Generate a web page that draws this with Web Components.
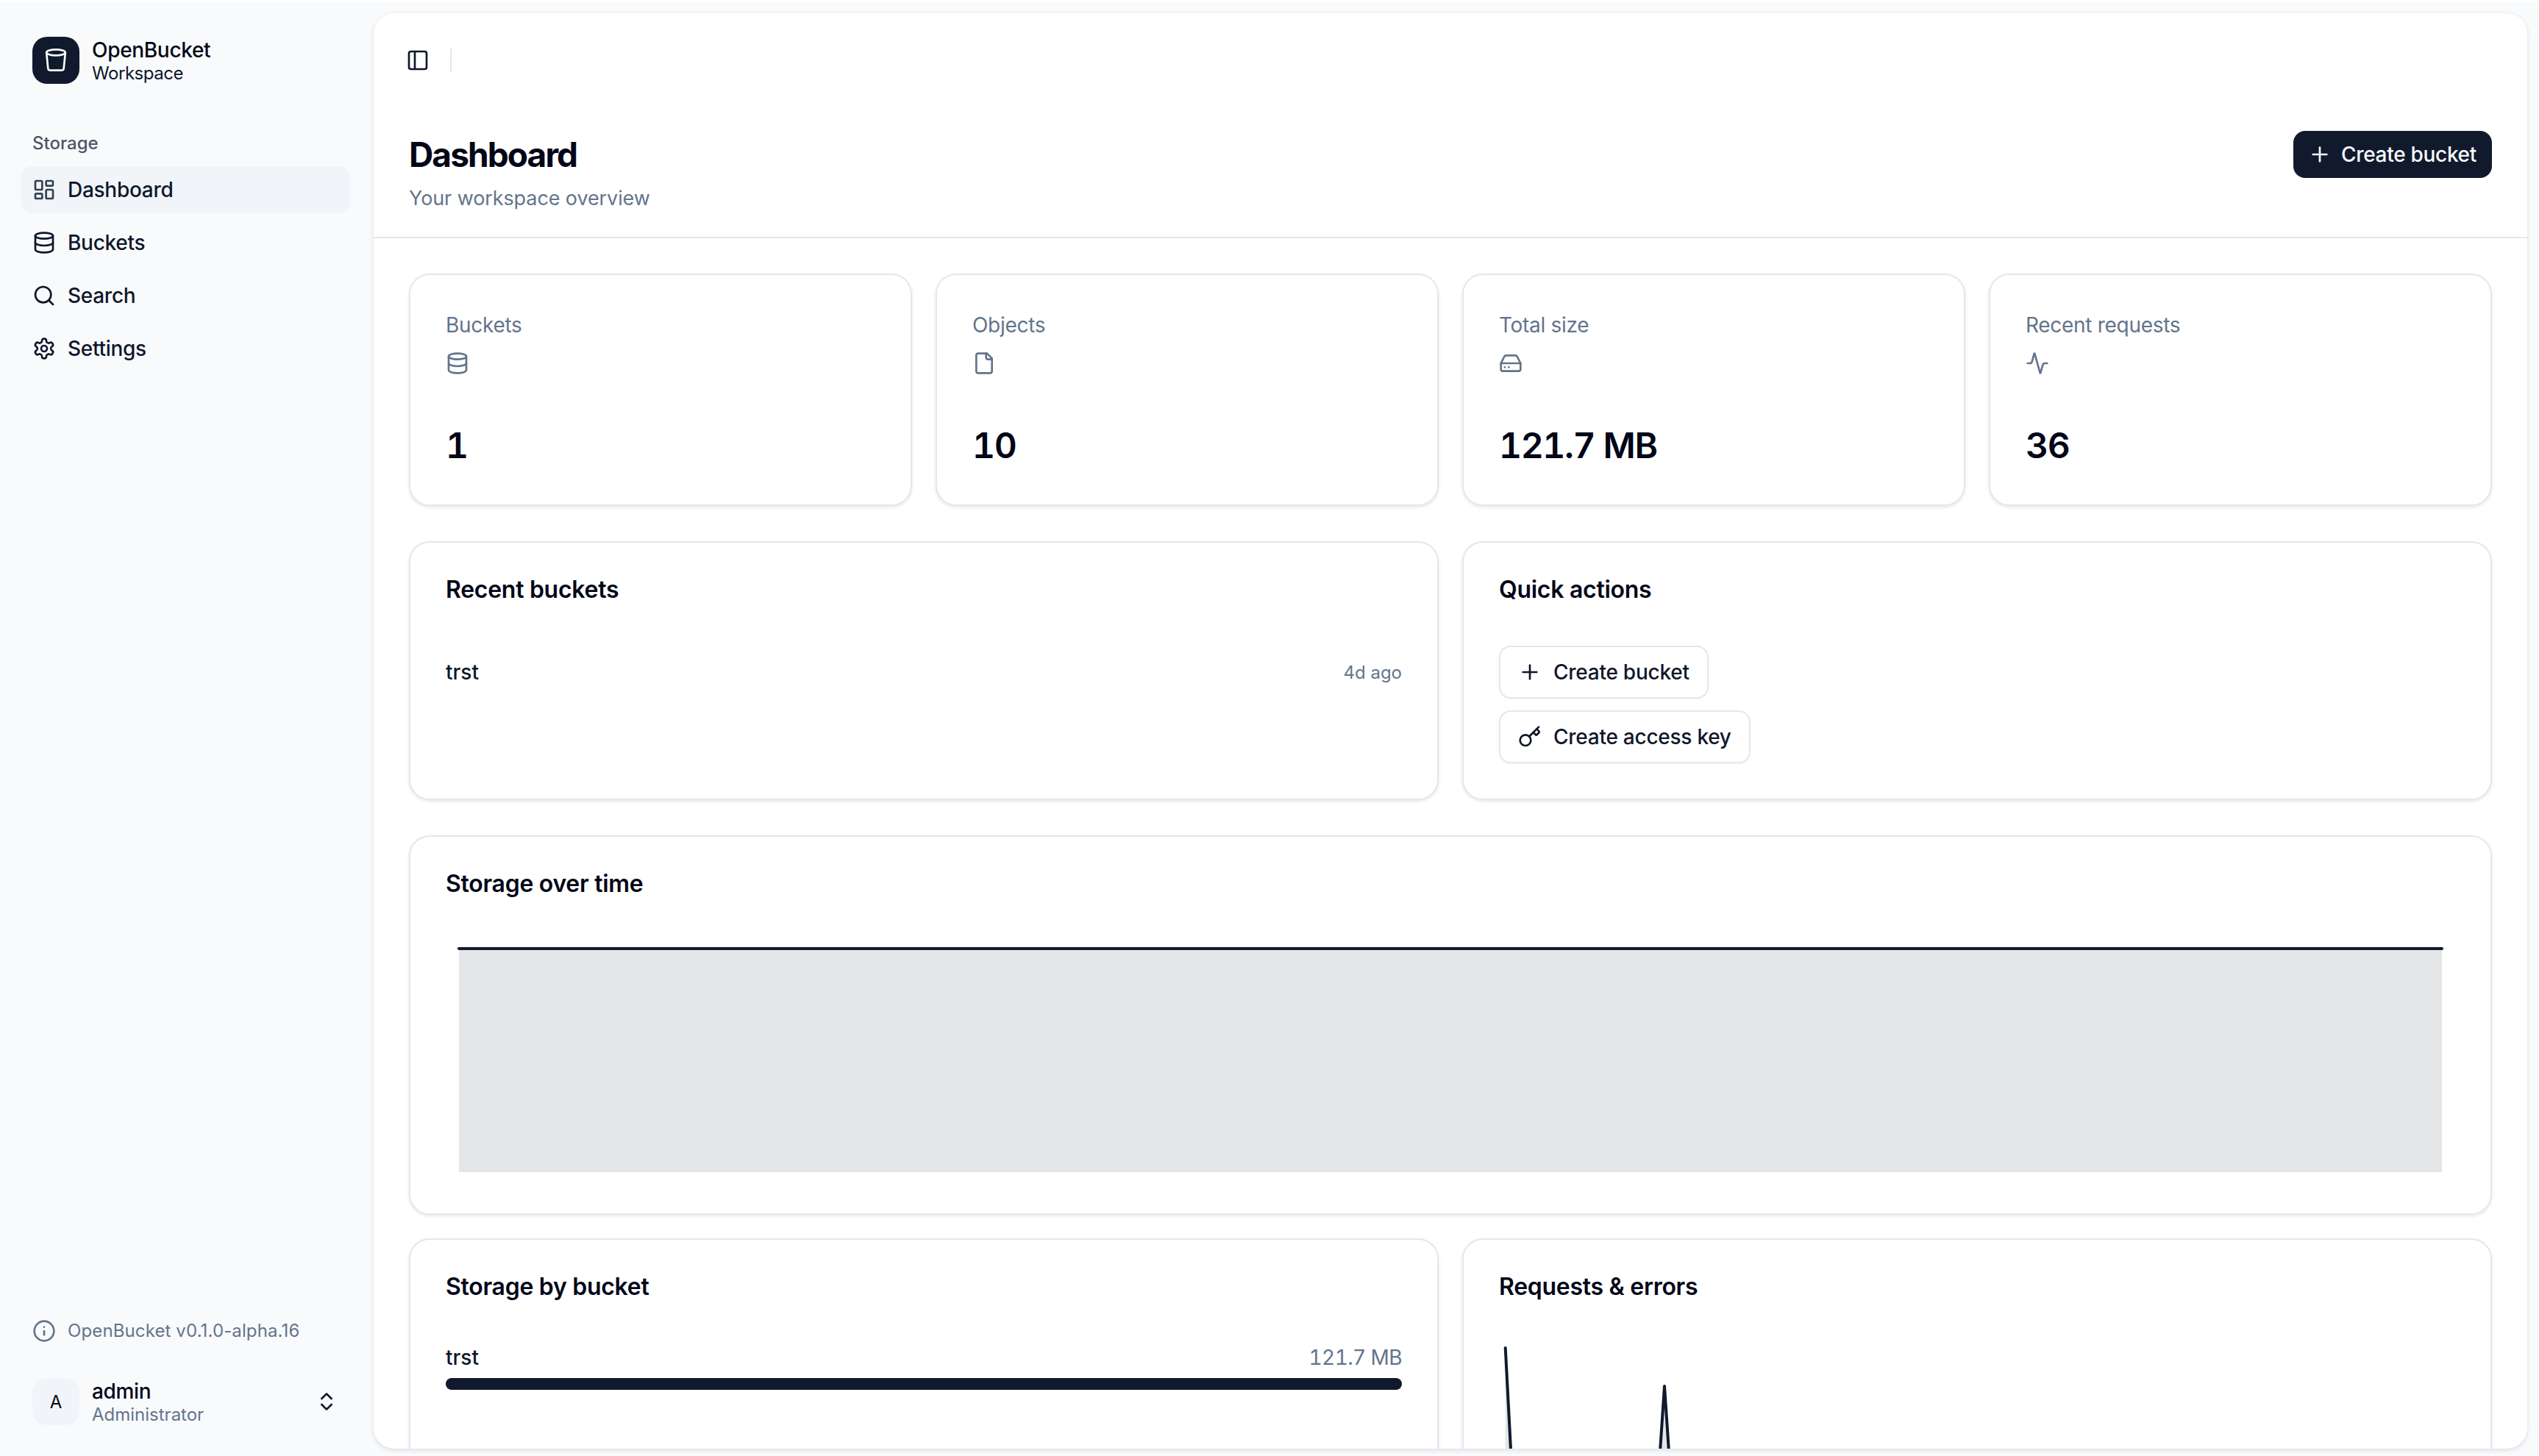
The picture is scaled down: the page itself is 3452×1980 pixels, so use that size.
<!DOCTYPE html>
<html lang="en">
<head>
<meta charset="utf-8">
<title>OpenBucket</title>
<style>
html,body{margin:0;padding:0;height:100%;background:#fff;overflow:hidden}
body{font-family:Inter,"Noto Sans",sans-serif;color:#0f172a;-webkit-font-smoothing:antialiased}
</style>
</head>
<body>
<ob-app>
  <ob-sidebar slot="sidebar"></ob-sidebar>
  <ob-main slot="main">
    <ob-grid columns="4">
      <ob-stat label="Buckets" icon="database" value="1"></ob-stat>
      <ob-stat label="Objects" icon="file" value="10"></ob-stat>
      <ob-stat label="Total size" icon="hard-drive" value="121.7 MB"></ob-stat>
      <ob-stat label="Recent requests" icon="activity" value="36"></ob-stat>
    </ob-grid>
    <ob-grid columns="2">
      <ob-card heading="Recent buckets"><ob-bucket-row name="trst" when="4d ago"></ob-bucket-row></ob-card>
      <ob-card heading="Quick actions">
        <ob-actions>
          <ob-button icon="plus">Create bucket</ob-button>
          <ob-button icon="key">Create access key</ob-button>
        </ob-actions>
      </ob-card>
    </ob-grid>
    <ob-stack>
      <ob-card heading="Storage over time"><ob-area-chart></ob-area-chart></ob-card>
      <ob-grid columns="2">
        <ob-card heading="Storage by bucket"><ob-usage-bar name="trst" size="121.7 MB"></ob-usage-bar></ob-card>
        <ob-card heading="Requests &amp; errors"><ob-request-chart></ob-request-chart></ob-card>
      </ob-grid>
    </ob-stack>
  </ob-main>
</ob-app>
<script>
const ICONS = {
  'layout-dashboard':'<rect width="7" height="9" x="3" y="3" rx="1"/><rect width="7" height="5" x="14" y="3" rx="1"/><rect width="7" height="9" x="14" y="12" rx="1"/><rect width="7" height="5" x="3" y="16" rx="1"/>',
  'database':'<ellipse cx="12" cy="5" rx="9" ry="3"/><path d="M3 5V19A9 3 0 0 0 21 19V5"/><path d="M3 12A9 3 0 0 0 21 12"/>',
  'search':'<path d="m21 21-4.34-4.34"/><circle cx="11" cy="11" r="8"/>',
  'settings':'<path d="M12.22 2h-.44a2 2 0 0 0-2 2v.18a2 2 0 0 1-1 1.73l-.43.25a2 2 0 0 1-2 0l-.15-.08a2 2 0 0 0-2.73.73l-.22.38a2 2 0 0 0 .73 2.73l.15.1a2 2 0 0 1 1 1.72v.51a2 2 0 0 1-1 1.74l-.15.09a2 2 0 0 0-.73 2.73l.22.38a2 2 0 0 0 2.73.73l.15-.08a2 2 0 0 1 2 0l.43.25a2 2 0 0 1 1 1.73V20a2 2 0 0 0 2 2h.44a2 2 0 0 0 2-2v-.18a2 2 0 0 1 1-1.73l.43-.25a2 2 0 0 1 2 0l.15.08a2 2 0 0 0 2.73-.73l.22-.39a2 2 0 0 0-.73-2.73l-.15-.08a2 2 0 0 1-1-1.74v-.5a2 2 0 0 1 1-1.74l.15-.09a2 2 0 0 0 .73-2.73l-.22-.38a2 2 0 0 0-2.73-.73l-.15.08a2 2 0 0 1-2 0l-.43-.25a2 2 0 0 1-1-1.73V4a2 2 0 0 0-2-2z"/><circle cx="12" cy="12" r="3"/>',
  'info':'<circle cx="12" cy="12" r="10"/><path d="M12 16v-4"/><path d="M12 8h.01"/>',
  'panel-left':'<rect width="18" height="18" x="3" y="3" rx="2"/><path d="M9 3v18"/>',
  'file':'<path d="M15 2H6a2 2 0 0 0-2 2v16a2 2 0 0 0 2 2h12a2 2 0 0 0 2-2V7Z"/><path d="M14 2v4a2 2 0 0 0 2 2h4"/>',
  'hard-drive':'<line x1="22" x2="2" y1="12" y2="12"/><path d="M5.45 5.11 2 12v6a2 2 0 0 0 2 2h16a2 2 0 0 0 2-2v-6l-3.45-6.89A2 2 0 0 0 16.76 4H7.24a2 2 0 0 0-1.79 1.11z"/><line x1="6" x2="6.01" y1="16" y2="16"/><line x1="10" x2="10.01" y1="16" y2="16"/>',
  'activity':'<path d="M22 12h-2.48a2 2 0 0 0-1.93 1.46l-2.35 8.36a.25.25 0 0 1-.48 0L9.24 2.18a.25.25 0 0 0-.48 0l-2.35 8.36A2 2 0 0 1 4.49 12H2"/>',
  'plus':'<path d="M5 12h14"/><path d="M12 5v14"/>',
  'key':'<path d="m15.5 7.5 2.3 2.3a1 1 0 0 0 1.4 0l2.1-2.1a1 1 0 0 0 0-1.4L19 4"/><path d="m21 2-9.6 9.6"/><circle cx="7.5" cy="15.5" r="5.5"/>',
  'chevrons-up-down':'<path d="m7 15 5 5 5-5"/><path d="m7 9 5-5 5 5"/>',
  'bucket':'<ellipse cx="12" cy="4" rx="9.6" ry="3"/><path d="M2.4 4.5 4 20.4a2 2 0 0 0 2 1.8h12a2 2 0 0 0 2-1.8l1.6-15.9"/>'
};
customElements.define('ob-icon', class extends HTMLElement{
  connectedCallback(){
    if(this.shadowRoot) return;
    const root = this.attachShadow({mode:'open'});
    const n = this.getAttribute('name');
    root.innerHTML = `<style>:host{display:block;width:32px;height:32px;flex:none}svg{display:block;width:32px;height:32px}</style><svg viewBox="0 0 24 24" fill="none" stroke="currentColor" stroke-width="2" stroke-linecap="round" stroke-linejoin="round">${ICONS[n]||''}</svg>`;
  }
});
function define(name, html){
  const tpl = document.createElement('template');
  tpl.innerHTML = html;
  customElements.define(name, class extends HTMLElement{
    connectedCallback(){
      if(this.shadowRoot) return;
      const root = this.attachShadow({mode:'open'});
      const frag = tpl.content.cloneNode(true);
      frag.querySelectorAll('[data-attr]').forEach(n=>{ n.textContent = this.getAttribute(n.dataset.attr) || ''; });
      frag.querySelectorAll('[data-icon]').forEach(n=>{ n.setAttribute('name', this.getAttribute(n.dataset.icon)); });
      root.appendChild(frag);
    }
  });
}
define('ob-app', `<style>
:host{display:flex;height:1978px;margin-top:2px;background:#f8fafc;overflow:hidden}
</style><slot name="sidebar"></slot><slot name="main"></slot>`);
define('ob-nav-item', `<style>
:host{display:flex;align-items:center;gap:16px;height:64px;padding:0 16px;border-radius:16px;font-size:28px;font-weight:500;line-height:40px;letter-spacing:-.28px;color:#0f172a}
:host([active]){background:#f1f5f9}
:host([active]) ob-icon{color:#334155}
</style><ob-icon data-icon="icon"></ob-icon><span data-attr="label"></span>`);
define('ob-sidebar', `<style>
:host{display:flex;flex-direction:column;flex:none;width:508px;box-sizing:border-box;height:100%}
.brand{display:flex;align-items:center;gap:17px;padding:48px 0 0 44px}
.logo{width:64px;height:64px;border-radius:20px;background:#111a2d;color:#f8fafc;display:flex;align-items:center;justify-content:center}
.who{display:flex;flex-direction:column;box-sizing:border-box;height:64px;padding-top:2px}
.t1{font-size:28px;line-height:32px;font-weight:500;letter-spacing:-.32px;color:#020617}
.t2{font-size:24px;line-height:32px;letter-spacing:-.45px;color:#0f172a}
.t3{font-size:24px;line-height:32px;color:#64748b}
.label{font-size:24px;line-height:32px;font-weight:500;color:#4f5565;margin:65px 0 0 44px}
nav{display:flex;flex-direction:column;gap:8px;margin:15px 32px 0 28px}
.foot{margin-top:auto;display:flex;flex-direction:column}
.ver{display:flex;align-items:center;gap:16px;padding-left:44px;color:#64748b;font-size:24px;line-height:32px;letter-spacing:.12px}
.user{display:flex;align-items:center;gap:17px;padding:48px 48px 42px 44px;}
.avatar{width:64px;height:64px;border-radius:20px;background:#f1f5f9;display:flex;align-items:center;justify-content:center;font-size:24px;color:#020617}
.who2{flex:1}
</style>
<div class="brand">
  <div class="logo"><ob-icon name="bucket"></ob-icon></div>
  <div class="who"><span class="t1">OpenBucket</span><span class="t2">Workspace</span></div>
</div>
<div class="label">Storage</div>
<nav>
  <ob-nav-item active icon="layout-dashboard" label="Dashboard"></ob-nav-item>
  <ob-nav-item icon="database" label="Buckets"></ob-nav-item>
  <ob-nav-item icon="search" label="Search"></ob-nav-item>
  <ob-nav-item icon="settings" label="Settings"></ob-nav-item>
</nav>
<div class="foot">
  <div class="ver"><ob-icon name="info"></ob-icon><span>OpenBucket v0.1.0-alpha.16</span></div>
  <div class="user">
    <div class="avatar">A</div>
    <div class="who who2"><span class="t1">admin</span><span class="t3">Administrator</span></div>
    <ob-icon name="chevrons-up-down"></ob-icon>
  </div>
</div>`);
define('ob-main', `<style>
:host{display:flex;flex-direction:column;flex:1;min-width:0;margin:16px 16px 10px 0;background:#fff;border-radius:28px;box-shadow:0 2px 6px rgba(15,23,42,.12);overflow:hidden}
.bar{display:flex;align-items:center;height:128px;padding-left:44px;flex:none}
.sep{width:2px;height:32px;background:#e2e8f0;margin-left:28px}
.head{display:flex;justify-content:space-between;align-items:flex-start;padding:32px 48px;border-bottom:2px solid #e2e8f0;flex:none}
h1{margin:0;font-size:46px;line-height:64px;font-weight:700;letter-spacing:-1.9px;color:#020617}
p{margin:8px 0 0;font-size:27px;line-height:40px;letter-spacing:-.1px;color:#64748b}
.content{display:flex;flex-direction:column;gap:48px;padding:48px}
.primary{display:flex;align-items:center;gap:13px;height:64px;padding:0 21px 0 20px;border-radius:16px;background:#111a2d;color:#f8fafc;font-size:28px;font-weight:500;line-height:40px;letter-spacing:-.3px}
</style>
<div class="bar"><ob-icon name="panel-left"></ob-icon><div class="sep"></div></div>
<header class="head">
  <div><h1>Dashboard</h1><p>Your workspace overview</p></div>
  <div class="primary"><ob-icon name="plus"></ob-icon><span>Create bucket</span></div>
</header>
<div class="content"><slot></slot></div>`);
define('ob-stack', `<style>:host{display:flex;flex-direction:column;gap:32px}</style><slot></slot>`);
define('ob-grid', `<style>
:host{display:grid;gap:32px;grid-template-columns:repeat(2,minmax(0,1fr))}
:host([columns="4"]){grid-template-columns:repeat(4,minmax(0,1fr))}
</style><slot></slot>`);
const cardCss = `:host{display:block;box-sizing:border-box;background:#fff;border:2px solid #e2e8f0;border-radius:28px;box-shadow:0 2px 4px rgba(15,23,42,.1);padding:48px;min-width:0}`;
define('ob-stat', `<style>${cardCss}
.l{font-size:28px;line-height:40px;letter-spacing:-.3px;color:#64748b}
ob-icon{color:#64748b;margin-top:16px}
.v{font-size:48px;line-height:64px;font-weight:600;font-variant-numeric:tabular-nums;letter-spacing:-1.4px;color:#020617;margin-top:64px}
</style><div class="l" data-attr="label"></div><ob-icon data-icon="icon"></ob-icon><div class="v" data-attr="value"></div>`);
define('ob-card', `<style>${cardCss}
h2{margin:0 0 60px;font-size:32px;line-height:32px;font-weight:600;letter-spacing:-.28px;color:#020617}
</style><h2 data-attr="heading"></h2><slot></slot>`);
define('ob-bucket-row', `<style>
:host{display:flex;align-items:center;justify-content:space-between;height:72px}
.n{font-size:28px;font-weight:500;color:#0f172a}
.w{font-size:24px;color:#64748b}
</style><span class="n" data-attr="name"></span><span class="w" data-attr="when"></span>`);
define('ob-actions', `<style>:host{display:flex;flex-direction:column;align-items:flex-start;gap:16px}</style><slot></slot>`);
define('ob-button', `<style>
:host{display:flex;align-items:center;gap:16px;box-sizing:border-box;height:72px;padding:0 24px;background:#fff;border:2px solid #e2e8f0;border-radius:16px;box-shadow:0 1px 2px rgba(15,23,42,.05);font-size:28px;font-weight:500;line-height:40px;letter-spacing:-.25px;color:#0f172a}
</style><ob-icon data-icon="icon"></ob-icon><slot></slot>`);
define('ob-area-chart', `<style>:host{display:block;height:324px}svg{display:block}</style>
<svg width="2732" height="324" viewBox="0 0 2732 324"><rect x="18" y="12" width="2696" height="304" fill="#e4e6e8"/><path d="M18 12H2714" fill="none" stroke="#111a2d" stroke-width="4" stroke-linecap="round"/></svg>`);
define('ob-usage-bar', `<style>
:host{display:block}
.r{display:flex;justify-content:space-between;font-size:28px;line-height:40px}
.n{font-weight:500;color:#0f172a}.s{color:#64748b;font-variant-numeric:tabular-nums;letter-spacing:-.6px}
.b{height:16px;border-radius:8px;background:#111a2d;margin-top:8px}
</style><div class="r"><span class="n" data-attr="name"></span><span class="s" data-attr="size"></span></div><div class="b"></div>`);
define('ob-request-chart', `<style>:host{display:block;height:400px}svg{display:block}</style>
<svg width="1300" height="400" viewBox="0 0 1300 400"><path d="M8.7 7 29.5 400H8.7Z M225 59 202 400H248Z" fill="#e4e6e8"/><path d="M8.7 7 29.5 400M202 400 225 59 248 400" fill="none" stroke="#111a2d" stroke-width="4" stroke-linecap="round" stroke-linejoin="round"/></svg>`);
</script>
</body>
</html>
